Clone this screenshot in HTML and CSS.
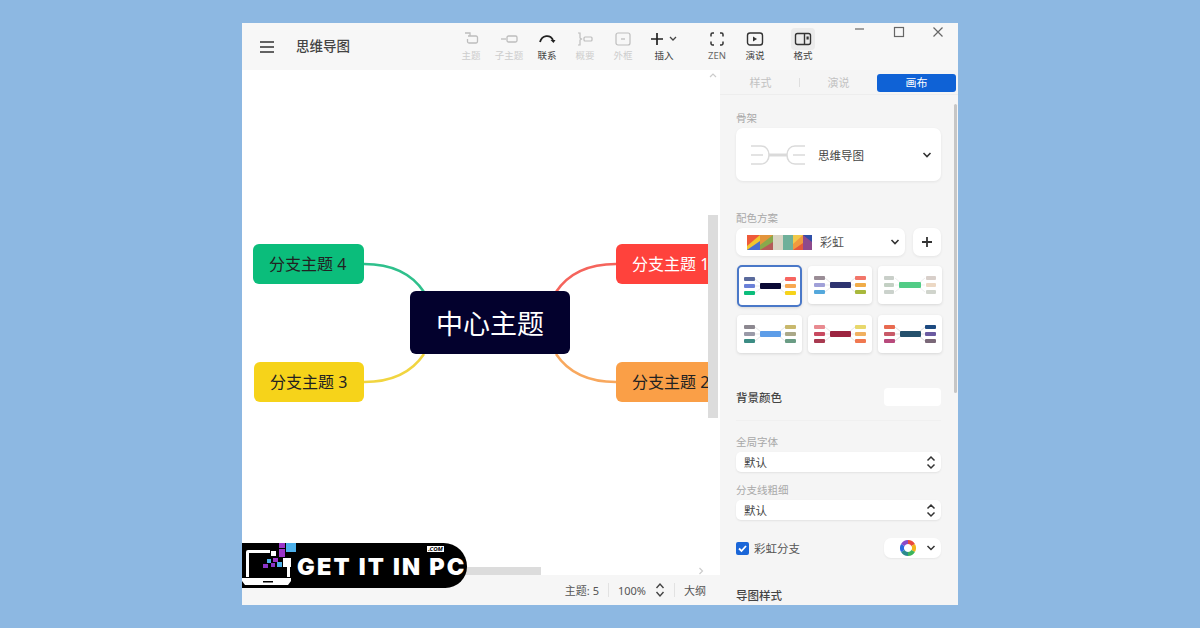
FILE: index.html
```html
<!DOCTYPE html>
<html lang="zh-CN">
<head>
    <meta charset="UTF-8">
    <meta name="viewport" content="width=device-width, initial-scale=1.0">
    <title>思维导图</title>
    <link rel="stylesheet" href="styles.css">
</head>
<body>
    <div class="window">
        <header class="topbar">
            <svg class="menu-icon" width="14" height="12" viewBox="0 0 14 12"><path d="M0 1h14M0 6h14M0 11h14" stroke="#333" stroke-width="1.6"/></svg>
            <span class="doc-title">思维导图</span>

            <div class="tools">
                <div class="tool off">
                    <svg width="18" height="16" viewBox="0 0 18 16"><path d="M3 2h5v3M6 5h8a1.500 1.500 0 0 1 1.500 1.500v4A1.500 1.500 0 0 1 14 12H7a1.500 1.500 0 0 1-1.500-1.500V8" fill="none" stroke="#bdbdbd" stroke-width="1.300"/></svg>
                    <span>主题</span>
                </div>
                <div class="tool off">
                    <svg width="18" height="16" viewBox="0 0 18 16"><path d="M1 8h5" stroke="#bdbdbd" stroke-width="1.300"/><rect x="7" y="5" width="10" height="6" rx="1.500" fill="none" stroke="#bdbdbd" stroke-width="1.300"/></svg>
                    <span>子主题</span>
                </div>
                <div class="tool">
                    <svg width="18" height="16" viewBox="0 0 18 16"><path d="M2 11C4 4 12 3 15 9" fill="none" stroke="#222" stroke-width="1.800"/><path d="M12.500 9h5l-2 3z" fill="#222"/></svg>
                    <span>联系</span>
                </div>
                <div class="tool off">
                    <svg width="18" height="16" viewBox="0 0 18 16"><path d="M2 2h2v5l1.500 1L4 9v5H2" fill="none" stroke="#bdbdbd" stroke-width="1.200"/><rect x="8" y="6" width="8" height="4" rx="1" fill="none" stroke="#bdbdbd" stroke-width="1.200"/></svg>
                    <span>概要</span>
                </div>
                <div class="tool off">
                    <svg width="18" height="16" viewBox="0 0 18 16"><rect x="2" y="2" width="14" height="12" rx="2" fill="none" stroke="#bdbdbd" stroke-width="1.200"/><path d="M7 8h4" stroke="#bdbdbd" stroke-width="1.300"/></svg>
                    <span>外框</span>
                </div>
                <div class="tool insert-tool">
                    <svg width="28" height="16" viewBox="0 0 28 16"><path d="M7 2v12M1 8h12" stroke="#222" stroke-width="1.700"/><path d="M20 6l3 3 3-3" fill="none" stroke="#444" stroke-width="1.300"/></svg>
                    <span>插入</span>
                </div>
                <div class="tool zen-tool">
                    <svg width="18" height="16" viewBox="0 0 18 16"><path d="M6 2H4.500A1.500 1.500 0 0 0 3 3.500v2M12 2h1.500A1.500 1.500 0 0 1 15 3.500v2M6 14H4.500A1.500 1.500 0 0 1 3 12.500v-2M12 14h1.500a1.500 1.500 0 0 0 1.500-1.500v-2" fill="none" stroke="#333" stroke-width="1.500"/></svg>
                    <span>ZEN</span>
                </div>
                <div class="tool">
                    <svg width="18" height="16" viewBox="0 0 18 16"><rect x="1.500" y="2" width="15" height="12" rx="2.500" fill="none" stroke="#333" stroke-width="1.400"/><path d="M7 5.500v5l4-2.500z" fill="#333"/></svg>
                    <span>演说</span>
                </div>
                <div class="tool format-tool">
                    <svg class="format-icon" width="24" height="22" viewBox="0 0 24 22"><rect x="4.500" y="5.500" width="15" height="11" rx="2" fill="none" stroke="#333" stroke-width="1.400"/><path d="M13.500 5.500v11" stroke="#333" stroke-width="1.400"/><rect x="15.500" y="8.500" width="2.200" height="3" fill="#333"/></svg>
                    <span>格式</span>
                </div>
            </div>

            <div class="win-buttons">
                <svg width="12" height="12" viewBox="0 0 12 12"><path d="M1 3h9" stroke="#666" stroke-width="1.200"/></svg>
                <svg width="12" height="12" viewBox="0 0 12 12"><rect x="1.500" y="1.500" width="9" height="9" fill="none" stroke="#666" stroke-width="1.200"/></svg>
                <svg width="12" height="12" viewBox="0 0 12 12"><path d="M1.500 1.500l9 9M10.500 1.500l-9 9" stroke="#666" stroke-width="1.200"/></svg>
            </div>
        </header>

        <div class="workspace">
            <main class="canvas-col">
                <div class="canvas-row">
                    <div class="canvas">
                        <svg class="links" width="466" height="505" viewBox="0 0 466 505">
                            <path d="M122 194C150 194 170 204 182 222" stroke="#2fc08c"/>
                            <path d="M122 312C150 312 170 302 182 284" stroke="#f1d540"/>
                            <path d="M374 194C346 194 326 204 314 222" stroke="#f5645c"/>
                            <path d="M374 312C346 312 326 302 314 284" stroke="#f8a85e"/>
                        </svg>
                        <div class="node node-center">中心主题</div>
                        <div class="node node-branch node-1">分支主题 1</div>
                        <div class="node node-branch node-2">分支主题 2</div>
                        <div class="node node-branch node-3">分支主题 3</div>
                        <div class="node node-branch node-4">分支主题 4</div>
                    </div>
                    <div class="v-track">
                        <svg class="v-arrow" width="10" height="6" viewBox="0 0 10 6"><path d="M2 5l3-3 3 3" fill="none" stroke="#ccc" stroke-width="1.200"/></svg>
                        <div class="v-thumb"></div>
                    </div>
                </div>
                <div class="h-track">
                    <div class="h-thumb"></div>
                    <svg class="h-arrow" width="6" height="8" viewBox="0 0 6 8"><path d="M1.500 1l3 3-3 3" fill="none" stroke="#ccc" stroke-width="1.200"/></svg>
                </div>
                <footer class="statusbar">
                    <span>主题: 5</span>
                    <i class="status-sep"></i>
                    <span>100%</span>
                    <svg width="10" height="16" viewBox="0 0 10 16"><path d="M1.500 6L5 2l3.500 4M1.500 10L5 14l3.500-4" fill="none" stroke="#444" stroke-width="1.400"/></svg>
                    <i class="status-sep"></i>
                    <span>大纲</span>
                </footer>
            </main>

            <aside class="sidebar">
                <div class="tabs">
                    <span class="tab">样式</span>
                    <i class="tab-sep"></i>
                    <span class="tab">演说</span>
                    <span class="tab tab-active">画布</span>
                </div>

                <div class="panel">
                    <div class="label label-first">骨架</div>
                    <div class="card skeleton-card">
                        <svg width="56" height="22" viewBox="0 0 56 22" fill="none" stroke="#dadada" stroke-width="1.500"><path d="M1 2h10c5 0 8 4 8 9s-3 9-8 9H1M1 11h12M43 11h12M55 2H45c-5 0-8 4-8 9s3 9 8 9h10"/><path d="M19 11h18" stroke-width="3"/></svg>
                        <span class="skeleton-name">思维导图</span>
                        <svg class="chevron" width="10" height="8" viewBox="0 0 10 8"><path d="M1.500 2L5 5.500 8.500 2" fill="none" stroke="#333" stroke-width="1.600"/></svg>
                    </div>

                    <div class="label label-scheme">配色方案</div>
                    <div class="scheme-row">
                        <div class="card scheme-select">
                            <svg width="65" height="15" viewBox="0 0 65 15">
                                <rect width="13" height="15" fill="#f1c62e"/><path d="M0 0h13L0 11z" fill="#ee5a3a"/><path d="M0 15l13-9v9z" fill="#4a6fd0"/>
                                <rect x="13" width="13" height="15" fill="#88a94c"/><path d="M13 0h13L13 10z" fill="#e2943c"/><path d="M13 15l13-8v8z" fill="#b55a58"/>
                                <rect x="26" width="10" height="15" fill="#d9d4c4"/><rect x="36" width="10" height="15" fill="#6fb09a"/>
                                <rect x="46" width="10" height="15" fill="#f09a3e"/><path d="M46 0h10L46 9z" fill="#f2c94a"/><path d="M46 15l10-7v7z" fill="#e4583c"/>
                                <rect x="56" width="9" height="15" fill="#8e4a8c"/><path d="M56 0h9v7z" fill="#2f4fa8"/>
                            </svg>
                            <span class="scheme-name">彩虹</span>
                            <svg class="chevron" width="10" height="8" viewBox="0 0 10 8"><path d="M1.500 2L5 5.500 8.500 2" fill="none" stroke="#333" stroke-width="1.600"/></svg>
                        </div>
                        <div class="card plus-button">
                            <svg width="10" height="10" viewBox="0 0 10 10"><path d="M5 0v10M0 5h10" stroke="#333" stroke-width="1.800"/></svg>
                        </div>
                    </div>

                    <div class="thumbs">
                        <div class="thumb thumb-selected">
                            <svg width="52" height="20" viewBox="0 0 52 20"><path d="M11 3l6 5M11 10h6M11 17l6-5M41 3l-6 5M41 10h-6M41 17l-6-5" fill="none" stroke="#ccc" stroke-width=".5"/><rect y="1" width="11" height="4" rx="1" fill="#5a6a9c"/><rect y="8" width="11" height="4" rx="1" fill="#6a80d8"/><rect y="15" width="11" height="4" rx="1" fill="#0bbd7b"/><rect x="16" y="7" width="21" height="6" rx="1" fill="#0b0a35"/><rect x="41" y="1" width="11" height="4" rx="1" fill="#f76560"/><rect x="41" y="8" width="11" height="4" rx="1" fill="#f8a850"/><rect x="41" y="15" width="11" height="4" rx="1" fill="#f6d31a"/></svg>
                        </div>
                        <div class="thumb">
                            <svg width="52" height="20" viewBox="0 0 52 20"><path d="M11 3l6 5M11 10h6M11 17l6-5M41 3l-6 5M41 10h-6M41 17l-6-5" fill="none" stroke="#ccc" stroke-width=".5"/><rect y="1" width="11" height="4" rx="1" fill="#9a8d96"/><rect y="8" width="11" height="4" rx="1" fill="#a0a0d8"/><rect y="15" width="11" height="4" rx="1" fill="#54a8dc"/><rect x="16" y="7" width="21" height="6" rx="1" fill="#2e3470"/><rect x="41" y="1" width="11" height="4" rx="1" fill="#f2766a"/><rect x="41" y="8" width="11" height="4" rx="1" fill="#f0ac48"/><rect x="41" y="15" width="11" height="4" rx="1" fill="#a8b83c"/></svg>
                        </div>
                        <div class="thumb">
                            <svg width="52" height="20" viewBox="0 0 52 20"><path d="M11 3l6 5M11 10h6M11 17l6-5M41 3l-6 5M41 10h-6M41 17l-6-5" fill="none" stroke="#ddd" stroke-width=".5"/><rect y="1" width="10" height="4" rx="1" fill="#c9cfc9"/><rect y="8" width="10" height="4" rx="1" fill="#c3d0c3"/><rect y="15" width="10" height="4" rx="1" fill="#cbd2cc"/><rect x="15" y="7" width="22" height="6" rx="1" fill="#52cc86"/><rect x="42" y="1" width="10" height="4" rx="1" fill="#d8cfca"/><rect x="42" y="8" width="10" height="4" rx="1" fill="#ecd8c4"/><rect x="42" y="15" width="10" height="4" rx="1" fill="#d0d4cc"/></svg>
                        </div>
                        <div class="thumb">
                            <svg width="52" height="20" viewBox="0 0 52 20"><path d="M11 3l6 5M11 10h6M11 17l6-5M41 3l-6 5M41 10h-6M41 17l-6-5" fill="none" stroke="#ccc" stroke-width=".5"/><rect y="1" width="11" height="4" rx="1" fill="#8c8890"/><rect y="8" width="11" height="4" rx="1" fill="#9a9aa8"/><rect y="15" width="11" height="4" rx="1" fill="#3c8c84"/><rect x="16" y="7" width="21" height="6" rx="1" fill="#5d9de8"/><rect x="41" y="1" width="11" height="4" rx="1" fill="#c8b86c"/><rect x="41" y="8" width="11" height="4" rx="1" fill="#aaa888"/><rect x="41" y="15" width="11" height="4" rx="1" fill="#6a9c84"/></svg>
                        </div>
                        <div class="thumb">
                            <svg width="52" height="20" viewBox="0 0 52 20"><path d="M11 3l6 5M11 10h6M11 17l6-5M41 3l-6 5M41 10h-6M41 17l-6-5" fill="none" stroke="#ccc" stroke-width=".5"/><rect y="1" width="11" height="4" rx="1" fill="#e88a90"/><rect y="8" width="11" height="4" rx="1" fill="#c84a60"/><rect y="15" width="11" height="4" rx="1" fill="#a83a50"/><rect x="16" y="7" width="21" height="6" rx="1" fill="#9c2440"/><rect x="41" y="1" width="11" height="4" rx="1" fill="#e8d86c"/><rect x="41" y="8" width="11" height="4" rx="1" fill="#f0b060"/><rect x="41" y="15" width="11" height="4" rx="1" fill="#f07850"/></svg>
                        </div>
                        <div class="thumb">
                            <svg width="52" height="20" viewBox="0 0 52 20"><path d="M11 3l6 5M11 10h6M11 17l6-5M41 3l-6 5M41 10h-6M41 17l-6-5" fill="none" stroke="#bbb" stroke-width=".5"/><rect y="1" width="11" height="4" rx="1" fill="#e86a50"/><rect y="8" width="11" height="4" rx="1" fill="#c85a68"/><rect y="15" width="11" height="4" rx="1" fill="#b84a7c"/><rect x="16" y="7" width="21" height="6" rx="1" fill="#24506c"/><rect x="41" y="1" width="11" height="4" rx="1" fill="#1c4a80"/><rect x="41" y="8" width="11" height="4" rx="1" fill="#6a5aa0"/><rect x="41" y="15" width="11" height="4" rx="1" fill="#7a6878"/></svg>
                        </div>
                    </div>

                    <div class="bg-row">
                        <span class="row-title">背景颜色</span>
                        <div class="bg-swatch"></div>
                    </div>

                    <div class="label label-font">全局字体</div>
                    <div class="select-bar">
                        <span>默认</span>
                        <svg width="10" height="15" viewBox="0 0 10 15"><path d="M1.500 5.500L5 2l3.500 3.500M1.500 9.500L5 13l3.500-3.500" fill="none" stroke="#333" stroke-width="1.500"/></svg>
                    </div>
                    <div class="label label-line">分支线粗细</div>
                    <div class="select-bar">
                        <span>默认</span>
                        <svg width="10" height="15" viewBox="0 0 10 15"><path d="M1.500 5.500L5 2l3.500 3.500M1.500 9.500L5 13l3.500-3.500" fill="none" stroke="#333" stroke-width="1.500"/></svg>
                    </div>

                    <div class="rainbow-row">
                        <span class="checkbox">
                            <svg width="13" height="13" viewBox="0 0 13 13"><path d="M3 6.500l2.500 2.500L10 4" fill="none" stroke="#fff" stroke-width="1.800"/></svg>
                        </span>
                        <span class="rainbow-name">彩虹分支</span>
                        <div class="rainbow-pick">
                            <svg width="16" height="16" viewBox="0 0 16 16" fill="none" stroke-width="4">
                                <path d="M8 2a6 6 0 0 1 5.200 3" stroke="#e8483c"/>
                                <path d="M13.200 5a6 6 0 0 1 0 6" stroke="#f4b41c"/>
                                <path d="M13.200 11a6 6 0 0 1-5.200 3" stroke="#3cb45a"/>
                                <path d="M8 14a6 6 0 0 1-5.200-3" stroke="#2a8a8c"/>
                                <path d="M2.800 11a6 6 0 0 1 0-6" stroke="#2a6ae0"/>
                                <path d="M2.800 5A6 6 0 0 1 8 2" stroke="#8a4ac8"/>
                            </svg>
                            <svg width="10" height="8" viewBox="0 0 10 8"><path d="M1.500 2L5 5.500 8.500 2" fill="none" stroke="#333" stroke-width="1.500"/></svg>
                        </div>
                    </div>

                    <div class="row-title map-style">导图样式</div>
                </div>
                <div class="side-scroll"></div>
            </aside>
        </div>

        <div class="site-logo">
            <svg class="logo-mark" width="55" height="45" viewBox="0 0 55 45">
                <path d="M4 34V9a2 2 0 0 1 2-2h22v3H7v24z" fill="#fff"/>
                <path d="M45 24h3v10h-3z" fill="#fff"/>
                <path d="M0 35h49v3l-3 4H3l-3-4z" fill="#fff"/>
                <rect x="21" y="38" width="10" height="1.500" fill="#000"/>
                <rect x="44" y="0" width="10" height="9" fill="#4db0ea"/>
                <rect x="37" y="0" width="6" height="5" fill="#9a35c8"/>
                <rect x="37" y="6" width="6" height="8" fill="#9a35c8"/>
                <rect x="29" y="8" width="5" height="5" fill="#fff"/>
                <rect x="41" y="15" width="8" height="9" fill="#fff"/>
                <rect x="31" y="15" width="5" height="4" fill="#9a35c8"/>
                <rect x="25" y="16" width="4" height="4" fill="#4db0ea"/>
                <rect x="35" y="19" width="5" height="5" fill="#4db0ea"/>
                <rect x="21" y="21" width="5" height="4" fill="#8a35c8"/>
                <rect x="29" y="20" width="4" height="4" fill="#8a35c8"/>
            </svg>
            <span class="logo-text">GET IT IN PC</span>
            <span class="logo-com">.COM</span>
        </div>
    </div>
</body>
</html>
```

FILE: styles.css
```css
* {
    box-sizing: border-box;
}

body {
    margin: 0;
    width: 1200px;
    height: 628px;
    padding: 23px 242px;
    overflow: hidden;
    background-color: #8db8e2;
    font-family: "Noto Sans", "Noto Sans CJK SC", sans-serif;
    color: #333;
}

.window {
    position: relative;
    width: 716px;
    height: 582px;
    display: flex;
    flex-direction: column;
    background-color: #f6f6f6;
}

/* top bar */
.topbar {
    height: 47px;
    flex: none;
    display: flex;
    align-items: flex-start;
    background-color: #f7f7f7;
}

.menu-icon {
    margin: 18px 0 0 18px;
}

.doc-title {
    margin: 14px 0 0 22px;
    width: 156px;
    font-size: 13.500px;
    line-height: 18px;
    font-weight: 500;
    color: #444;
}

.tools {
    display: flex;
    padding-top: 8px;
}

.tool {
    width: 38px;
    display: flex;
    flex-direction: column;
    align-items: center;
    font-size: 9.500px;
    line-height: 14px;
    color: #444;
}

.tool svg {
    margin-bottom: 2px;
}

.tool.off {
    color: #cdcdcd;
}

.insert-tool {
    margin-left: 3px;
}

.zen-tool {
    margin-left: 15px;
    color: #666;
}

.format-tool {
    margin-left: 10px;
}

.tool .format-icon {
    margin: -3px 0 -1px;
    background-color: #ebebeb;
    border-radius: 4px;
}

.win-buttons {
    display: flex;
    gap: 27px;
    margin: 3px 0 0 32px;
}

/* canvas */
.workspace {
    flex: 1;
    display: flex;
    min-height: 0;
}

.canvas-col {
    width: 478px;
    display: flex;
    flex-direction: column;
}

.canvas-row {
    flex: 1;
    display: flex;
    min-height: 0;
    background-color: #fff;
}

.canvas {
    position: relative;
    width: 466px;
    overflow: hidden;
    background-color: #fff;
}

.links {
    position: absolute;
    left: 0;
    top: 0;
}

.links path {
    fill: none;
    stroke-width: 2.500;
}

.node {
    position: absolute;
    display: flex;
    align-items: center;
    white-space: nowrap;
    border-radius: 6px;
}

.node-center {
    left: 168px;
    top: 221px;
    width: 160px;
    height: 63px;
    justify-content: center;
    background-color: #03012d;
    color: #fff;
    font-size: 27px;
}

.node-branch {
    height: 40px;
    padding-left: 16px;
    padding-bottom: 2px;
    font-size: 16px;
    color: #222;
}

.node-1 {
    left: 374px;
    top: 174px;
    width: 120px;
    background-color: #ff423c;
    color: #fff;
}

.node-2 {
    left: 374px;
    top: 292px;
    width: 120px;
    background-color: #fa9f47;
}

.node-3 {
    left: 12px;
    top: 292px;
    width: 110px;
    background-color: #f6d31a;
}

.node-4 {
    left: 11px;
    top: 174px;
    width: 111px;
    background-color: #0bbd7b;
}

.v-track {
    width: 12px;
    display: flex;
    flex-direction: column;
    background-color: #fff;
    padding: 2px 2px 0 0;
}

.v-arrow {
    flex: none;
}

.v-thumb {
    height: 203px;
    margin-top: 137px;
    background-color: #dcdcdc;
}

.h-track {
    height: 8px;
    flex: none;
    display: flex;
    justify-content: space-between;
    padding-right: 16px;
    background-color: #fff;
}

.h-thumb {
    width: 299px;
    height: 8px;
    background-color: #dcdcdc;
}

.statusbar {
    height: 30px;
    flex: none;
    display: flex;
    align-items: center;
    justify-content: flex-end;
    padding-right: 14px;
    gap: 9px;
    font-size: 11px;
    color: #555;
    background-color: #f6f6f6;
}

.status-sep {
    width: 1px;
    height: 14px;
    background-color: #e2e2e2;
}

/* side panel */
.sidebar {
    position: relative;
    width: 238px;
    overflow: hidden;
    background-color: #f5f5f5;
}

.tabs {
    display: flex;
    align-items: center;
    height: 25px;
    padding: 4px 2px 3px 2px;
    border-bottom: 1px solid #ededed;
}

.tab {
    flex: 1;
    text-align: center;
    font-size: 11px;
    line-height: 18px;
    color: #c2c2c2;
}

.tab-sep {
    width: 1px;
    height: 9px;
    background-color: #dedede;
}

.tab-active {
    flex: none;
    width: 79px;
    border-radius: 3px;
    background-color: #0f62d6;
    color: #fff;
}

.panel {
    padding: 0 17px 0 16px;
}

.label {
    font-size: 10.500px;
    line-height: 16px;
    color: #a8a8a8;
}

.label-first {
    margin-top: 15px;
}

.card {
    display: flex;
    align-items: center;
    background-color: #fff;
    border-radius: 7px;
    box-shadow: 0 1px 3px rgba(0, 0, 0, 0.07);
}

.skeleton-card {
    height: 53px;
    margin-top: 2px;
    padding: 0 9px 0 14px;
}

.skeleton-name {
    flex: 1;
    margin-left: 12px;
    font-size: 11.500px;
    color: #444;
}

.label-scheme {
    margin-top: 29px;
}

.scheme-row {
    display: flex;
    gap: 8px;
    margin-top: 2px;
}

.scheme-select {
    width: 169px;
    height: 28px;
    padding: 0 5px 0 11px;
}

.scheme-name {
    flex: 1;
    margin-left: 8px;
    font-size: 12px;
    color: #555;
}

.plus-button {
    width: 28px;
    height: 28px;
    justify-content: center;
}

.thumbs {
    display: grid;
    grid-template-columns: 65px 64px 64px;
    grid-auto-rows: 38px;
    column-gap: 6px;
    row-gap: 11px;
    margin-top: 10px;
    padding-left: 1px;
}

.thumb {
    display: flex;
    align-items: center;
    justify-content: center;
    background-color: #fff;
    border-radius: 4px;
    box-shadow: 0 1px 3px rgba(0, 0, 0, 0.12);
}

.thumb-selected {
    height: 42px;
    margin-top: -1px;
    border: 2px solid #4a78c8;
    border-radius: 5px;
}

.bg-row {
    display: flex;
    align-items: center;
    justify-content: space-between;
    margin-top: 35px;
    padding-bottom: 14px;
    border-bottom: 1px solid #f0f0f0;
}

.row-title {
    font-size: 11.500px;
    font-weight: 500;
    color: #444;
}

.bg-swatch {
    width: 57px;
    height: 18px;
    background-color: #fff;
    border-radius: 4px;
}

.label-font {
    margin-top: 13px;
}

.label-line {
    margin-top: 10px;
}

.select-bar {
    display: flex;
    align-items: center;
    justify-content: space-between;
    height: 20px;
    margin-top: 2px;
    padding: 0 5px 0 8px;
    background-color: #fff;
    border-radius: 5px;
    box-shadow: 0 1px 2px rgba(0, 0, 0, 0.08);
    font-size: 11.500px;
    color: #444;
}

.rainbow-row {
    display: flex;
    align-items: center;
    margin-top: 18px;
}

.checkbox {
    width: 13px;
    height: 13px;
    display: flex;
    background-color: #1a66d8;
    border-radius: 2px;
}

.rainbow-name {
    flex: 1;
    margin-left: 5px;
    font-size: 11.500px;
    color: #555;
}

.rainbow-pick {
    width: 57px;
    height: 20px;
    display: flex;
    align-items: center;
    justify-content: flex-end;
    gap: 10px;
    padding-right: 5px;
    background-color: #fff;
    border-radius: 7px;
    box-shadow: 0 1px 2px rgba(0, 0, 0, 0.06);
}

.map-style {
    margin-top: 29px;
}

.side-scroll {
    position: absolute;
    right: 1px;
    top: 34px;
    width: 3px;
    height: 289px;
    background-color: #c6c6c6;
    border-radius: 2px;
}

/* watermark over the window */
.site-logo {
    position: absolute;
    left: 0;
    top: 520px;
    width: 225px;
    height: 45px;
    display: flex;
    align-items: center;
    background-color: #000;
    border-radius: 0 26px 24px 0;
}

.logo-mark {
    flex: none;
    overflow: visible;
}

.logo-text {
    padding-top: 2px;
    font-family: "Inter", sans-serif;
    font-size: 23.500px;
    line-height: 19px;
    font-weight: 900;
    letter-spacing: 2.200px;
    white-space: nowrap;
    color: #fff;
}

.logo-com {
    position: absolute;
    left: 185px;
    top: 3px;
    width: 17px;
    background-color: #fff;
    color: #000;
    font-size: 6px;
    line-height: 6px;
    font-weight: 700;
    font-style: italic;
    text-align: center;
}
```
